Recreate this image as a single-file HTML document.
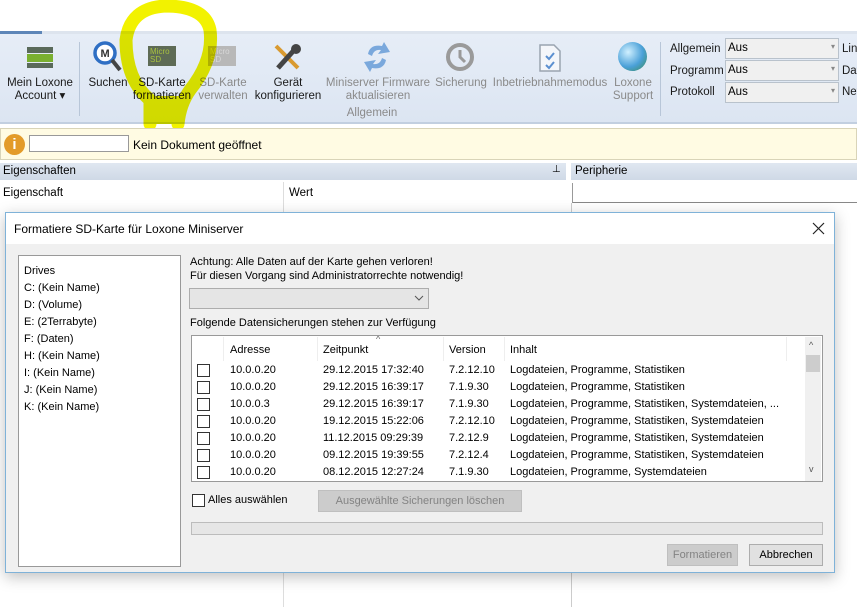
<!DOCTYPE html>
<html><head><meta charset="utf-8"><style>
*{margin:0;padding:0;box-sizing:border-box}
body{width:857px;height:607px;overflow:hidden;background:#fff;font-family:"Liberation Sans",sans-serif;font-size:11px;color:#000;position:relative}
.a{position:absolute;white-space:nowrap}
.rb{font-size:11.5px;text-align:center;line-height:13px;color:#1a1a1a}
.dis{color:#8a8a8a}
.cb{position:absolute;width:13px;height:13px;border:1px solid #333;background:#fff}
.row{position:absolute;left:0;height:17px;font-size:11px}
</style></head><body>
<div class="a" style="left:0;top:31px;width:857px;height:4px;background:#dde4ee"></div>
<div class="a" style="left:0;top:31px;width:42px;height:3px;background:#5d86b8"></div>
<div class="a" style="left:0;top:34px;width:857px;height:90px;background:linear-gradient(#e6edf7,#dce5f2);border-bottom:2px solid #c2cfe0"></div>
<div class="a" style="left:79px;top:42px;width:1px;height:74px;background:#b8c6d8"></div>
<div class="a" style="left:660px;top:42px;width:1px;height:74px;background:#b8c6d8"></div>
<div class="a" style="left:27px;top:47px;width:26px;height:6px;background:#5a6a5a"></div>
<div class="a" style="left:27px;top:54px;width:26px;height:8px;background:#7ab030"></div>
<div class="a" style="left:27px;top:63px;width:26px;height:5px;background:#5a6a5a"></div>
<svg class="a" style="left:92px;top:40px" width="32" height="34"><circle cx="13" cy="13" r="10" fill="#fff" stroke="#2f6fc4" stroke-width="3.5"/><text x="8.5" y="17" font-size="11" font-weight="bold" fill="#333" font-family="Liberation Sans">M</text><line x1="20" y1="20" x2="28" y2="30" stroke="#444" stroke-width="4"/></svg>
<div class="a" style="left:148px;top:46px;width:28px;height:20px;background:#5e6b55;color:#a8c040;font-size:8px;line-height:8px;padding:2px 2px">Micro<br>SD</div>
<div class="a" style="left:208px;top:46px;width:28px;height:20px;background:#b8b8b8;color:#d8d8d8;font-size:8px;line-height:8px;padding:2px 2px">Micro<br>SD</div>
<svg class="a" style="left:272px;top:42px" width="30" height="30"><line x1="4" y1="4" x2="26" y2="26" stroke="#d99a30" stroke-width="4"/><line x1="24" y1="6" x2="6" y2="26" stroke="#444" stroke-width="5"/><circle cx="24" cy="7" r="5" fill="#444"/></svg>
<svg class="a" style="left:362px;top:40px" width="30" height="34"><path d="M6 14 Q8 4 20 6 L22 2 L28 12 L16 14 L19 10 Q12 9 10 16Z" fill="#7aa8dc"/><path d="M24 20 Q22 30 10 28 L8 32 L2 22 L14 20 L11 24 Q18 25 20 18Z" fill="#7aa8dc"/></svg>
<svg class="a" style="left:444px;top:41px" width="32" height="32"><circle cx="16" cy="16" r="12" fill="none" stroke="#9a9a9a" stroke-width="4"/><path d="M16 9 V16 L21 21" stroke="#9a9a9a" stroke-width="3" fill="none"/></svg>
<svg class="a" style="left:538px;top:43px" width="24" height="30"><path d="M2 2 H16 L22 8 V28 H2Z" fill="#f4f6fa" stroke="#9aa4b0" stroke-width="1.5"/><path d="M8 13 l3 3 l5-6 M8 22 l3 3 l5-6" stroke="#5b8fd0" stroke-width="2" fill="none"/></svg>
<div class="a" style="left:618px;top:42px;width:29px;height:29px;border-radius:50%;background:radial-gradient(circle at 35% 35%,#d0f0ff,#4aa0d8 55%,#3a8a50)"></div>
<div class="a rb" style="left:4px;top:77px;width:72px">Mein Loxone<br>Account ▾</div>
<div class="a rb" style="left:86px;top:77px;width:44px">Suchen</div>
<div class="a rb" style="left:128px;top:77px;width:68px">SD-Karte<br>formatieren</div>
<div class="a rb dis" style="left:192px;top:77px;width:62px">SD-Karte<br>verwalten</div>
<div class="a rb" style="left:250px;top:77px;width:76px">Gerät<br>konfigurieren</div>
<div class="a rb dis" style="left:324px;top:77px;width:108px">Miniserver Firmware<br>aktualisieren</div>
<div class="a rb dis" style="left:432px;top:77px;width:58px">Sicherung</div>
<div class="a rb dis" style="left:489px;top:77px;width:122px">Inbetriebnahmemodus</div>
<div class="a rb dis" style="left:608px;top:77px;width:50px">Loxone<br>Support</div>
<div class="a rb dis" style="left:330px;top:107px;width:84px">Allgemein</div>
<div class="a rb" style="left:670px;top:43px;text-align:left">Allgemein</div>
<div class="a rb" style="left:670px;top:65px;text-align:left">Programm</div>
<div class="a rb" style="left:670px;top:86px;text-align:left">Protokoll</div>
<div class="a rb" style="left:842px;top:43px;text-align:left">Lin</div>
<div class="a rb" style="left:842px;top:65px;text-align:left">Dat</div>
<div class="a rb" style="left:842px;top:86px;text-align:left">Net</div>
<div class="a" style="left:725px;top:38px;width:114px;height:21px;background:#f0f0f0;border:1px solid #b9c2cc;padding:3px 2px;font-size:11.5px">Aus<span style="position:absolute;right:3px;top:3px;color:#888;font-size:8px">▾</span></div>
<div class="a" style="left:725px;top:60px;width:114px;height:21px;background:#f0f0f0;border:1px solid #b9c2cc;padding:3px 2px;font-size:11.5px">Aus<span style="position:absolute;right:3px;top:3px;color:#888;font-size:8px">▾</span></div>
<div class="a" style="left:725px;top:82px;width:114px;height:21px;background:#f0f0f0;border:1px solid #b9c2cc;padding:3px 2px;font-size:11.5px">Aus<span style="position:absolute;right:3px;top:3px;color:#888;font-size:8px">▾</span></div>
<svg class="a" style="left:0;top:0;mix-blend-mode:multiply" width="260" height="130"><path d="M150 124 L150 100 Q126 80 126 40 Q130 8 165 6 Q205 6 210 30 Q214 60 190 90 Q180 104 178 124" fill="none" stroke="#f2f200" stroke-width="13" stroke-linecap="round"/><path d="M146 96 L182 96 L178 124 L148 124Z" fill="#f2f200"/></svg>
<div class="a" style="left:0;top:128px;width:857px;height:32px;background:#fffbe3;border:1px solid #d9d4b8"></div>
<div class="a" style="left:4px;top:134px;width:21px;height:21px;border-radius:50%;background:#e39b2a;color:#fff;font-weight:bold;font-size:15px;text-align:center;line-height:21px">i</div>
<div class="a" style="left:29px;top:135px;width:100px;height:17px;background:#fff;border:1px solid #999"></div>
<div class="a" style="left:133px;top:138px;font-size:12px">Kein Dokument geöffnet</div>
<div class="a" style="left:0;top:163px;width:566px;height:17px;background:linear-gradient(#e0e7f1,#cfd9e6)"></div>
<div class="a" style="left:3px;top:165px;font-size:11.5px">Eigenschaften</div>
<div class="a" style="left:552px;top:164px;font-size:10px">⊥</div>
<div class="a" style="left:571px;top:163px;width:286px;height:17px;background:linear-gradient(#e0e7f1,#cfd9e6)"></div>
<div class="a" style="left:575px;top:165px;font-size:11.5px">Peripherie</div>
<div class="a" style="left:3px;top:187px;font-size:11.5px">Eigenschaft</div>
<div class="a" style="left:289px;top:187px;font-size:11.5px">Wert</div>
<div class="a" style="left:283px;top:182px;width:1px;height:425px;background:#ddd"></div>
<div class="a" style="left:572px;top:183px;width:285px;height:20px;border-left:1px solid #999;border-bottom:1px solid #888"></div>
<div class="a" style="left:571px;top:203px;width:1px;height:404px;background:#ccc"></div>
<div class="a" style="left:5px;top:212px;width:830px;height:361px;background:#f0f0f0;border:1px solid #7fb2d8;box-shadow:0 4px 14px rgba(0,0,0,0.25)"></div>
<div class="a" style="left:6px;top:213px;width:828px;height:31px;background:#fff"></div>
<div class="a" style="left:14px;top:222px;font-size:12px">Formatiere SD-Karte für Loxone Miniserver</div>
<svg class="a" style="left:812px;top:222px" width="13" height="13"><path d="M1 1 L12 12 M12 1 L1 12" stroke="#222" stroke-width="1.2"/></svg>
<div class="a" style="left:18px;top:255px;width:163px;height:312px;background:#fff;border:1px solid #999"></div>
<div class="a" style="left:24px;top:263px;line-height:17px;font-size:11px">Drives<br>C: (Kein Name)<br>D: (Volume)<br>E: (2Terrabyte)<br>F: (Daten)<br>H: (Kein Name)<br>I: (Kein Name)<br>J: (Kein Name)<br>K: (Kein Name)</div>
<div class="a" style="left:190px;top:255px;line-height:14px">Achtung: Alle Daten auf der Karte gehen verloren!<br>Für diesen Vorgang sind Administratorrechte notwendig!</div>
<div class="a" style="left:189px;top:288px;width:240px;height:21px;background:#e5e5e5;border:1px solid #adadad"></div>
<svg class="a" style="left:414px;top:295px" width="10" height="7"><path d="M1 1 L5 5 L9 1" stroke="#555" fill="none"/></svg>
<div class="a" style="left:190px;top:317px">Folgende Datensicherungen stehen zur Verfügung</div>
<div class="a" style="left:191px;top:335px;width:632px;height:147px;background:#fff;border:1px solid #999;overflow:hidden">
 <div class="a" style="left:31px;top:1px;width:1px;height:24px;background:#eee"></div>
 <div class="a" style="left:125px;top:1px;width:1px;height:24px;background:#eee"></div>
 <div class="a" style="left:251px;top:1px;width:1px;height:24px;background:#eee"></div>
 <div class="a" style="left:312px;top:1px;width:1px;height:24px;background:#eee"></div>
 <div class="a" style="left:594px;top:1px;width:1px;height:24px;background:#eee"></div>
 <div class="a" style="left:38px;top:8px">Adresse</div>
 <div class="a" style="left:131px;top:8px">Zeitpunkt</div>
 <div class="a" style="left:184px;top:-2px;font-size:9px;color:#666">^</div>
 <div class="a" style="left:257px;top:8px">Version</div>
 <div class="a" style="left:318px;top:8px">Inhalt</div>
 <div class="a" style="left:613px;top:1px;width:16px;height:144px;background:#f0f0f0"></div>
 <div class="a" style="left:617px;top:4px;font-size:9px;color:#555">^</div>
 <div class="a" style="left:614px;top:19px;width:14px;height:17px;background:#cdcdcd"></div>
 <div class="a" style="left:617px;top:128px;font-size:9px;color:#555">v</div>
</div>
<div class="a" style="left:191px;top:362px;width:600px">
 <div class="row" style="top:0"><span class="cb" style="left:6px;top:2px"></span><span class="a" style="left:39px;top:2px">10.0.0.20</span><span class="a" style="left:132px;top:2px">29.12.2015 17:32:40</span><span class="a" style="left:258px;top:2px">7.2.12.10</span><span class="a" style="left:319px;top:2px">Logdateien, Programme, Statistiken</span></div>
 <div class="row" style="top:17px"><span class="cb" style="left:6px;top:2px"></span><span class="a" style="left:39px;top:2px">10.0.0.20</span><span class="a" style="left:132px;top:2px">29.12.2015 16:39:17</span><span class="a" style="left:258px;top:2px">7.1.9.30</span><span class="a" style="left:319px;top:2px">Logdateien, Programme, Statistiken</span></div>
 <div class="row" style="top:34px"><span class="cb" style="left:6px;top:2px"></span><span class="a" style="left:39px;top:2px">10.0.0.3</span><span class="a" style="left:132px;top:2px">29.12.2015 16:39:17</span><span class="a" style="left:258px;top:2px">7.1.9.30</span><span class="a" style="left:319px;top:2px">Logdateien, Programme, Statistiken, Systemdateien, ...</span></div>
 <div class="row" style="top:51px"><span class="cb" style="left:6px;top:2px"></span><span class="a" style="left:39px;top:2px">10.0.0.20</span><span class="a" style="left:132px;top:2px">19.12.2015 15:22:06</span><span class="a" style="left:258px;top:2px">7.2.12.10</span><span class="a" style="left:319px;top:2px">Logdateien, Programme, Statistiken, Systemdateien</span></div>
 <div class="row" style="top:68px"><span class="cb" style="left:6px;top:2px"></span><span class="a" style="left:39px;top:2px">10.0.0.20</span><span class="a" style="left:132px;top:2px">11.12.2015 09:29:39</span><span class="a" style="left:258px;top:2px">7.2.12.9</span><span class="a" style="left:319px;top:2px">Logdateien, Programme, Statistiken, Systemdateien</span></div>
 <div class="row" style="top:85px"><span class="cb" style="left:6px;top:2px"></span><span class="a" style="left:39px;top:2px">10.0.0.20</span><span class="a" style="left:132px;top:2px">09.12.2015 19:39:55</span><span class="a" style="left:258px;top:2px">7.2.12.4</span><span class="a" style="left:319px;top:2px">Logdateien, Programme, Statistiken, Systemdateien</span></div>
 <div class="row" style="top:102px"><span class="cb" style="left:6px;top:2px"></span><span class="a" style="left:39px;top:2px">10.0.0.20</span><span class="a" style="left:132px;top:2px">08.12.2015 12:27:24</span><span class="a" style="left:258px;top:2px">7.1.9.30</span><span class="a" style="left:319px;top:2px">Logdateien, Programme, Systemdateien</span></div>
</div>
<span class="cb" style="left:192px;top:494px"></span>
<div class="a" style="left:208px;top:494px">Alles auswählen</div>
<div class="a" style="left:318px;top:490px;width:204px;height:22px;background:#ccc;border:1px solid #bfbfbf;color:#838383;text-align:center;line-height:20px">Ausgewählte Sicherungen löschen</div>
<div class="a" style="left:191px;top:522px;width:632px;height:13px;background:#e6e6e6;border:1px solid #bcbcbc"></div>
<div class="a" style="left:667px;top:544px;width:71px;height:22px;background:#ccc;border:1px solid #bfbfbf;color:#838383;text-align:center;line-height:20px">Formatieren</div>
<div class="a" style="left:749px;top:544px;width:74px;height:22px;background:#e1e1e1;border:1px solid #adadad;text-align:center;line-height:20px">Abbrechen</div>
</body></html>
